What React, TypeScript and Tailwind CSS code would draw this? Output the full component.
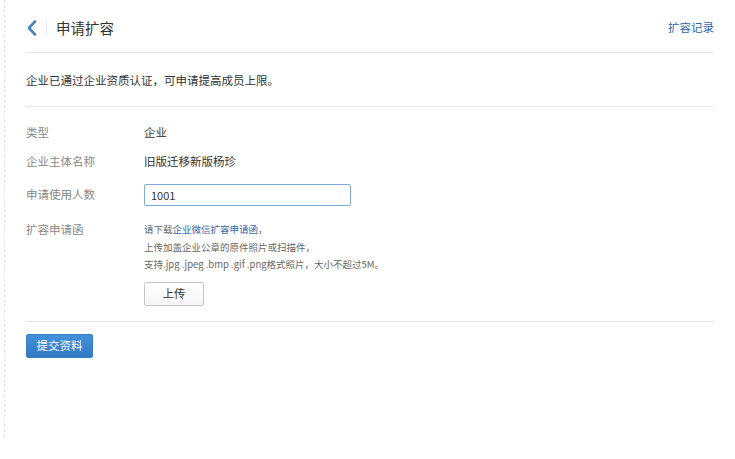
const font = { fontFamily: '"Noto Sans CJK SC", "Noto Sans", sans-serif' }

export default function App() {
  return (
    <div className="w-[735px] h-[459px] bg-white text-[11.5px] text-[#333]" style={font}>
      <div className="ml-[4px] h-[437px] border-l border-dashed border-[#e3e3e3] pl-[21px] w-[710px]">
        {/* Header */}
        <div className="h-[53px] border-b border-[#e4e4e4] flex items-center justify-between pt-[3px]">
          <div className="flex items-center">
            <svg width="10" height="16" viewBox="0 0 10 16" className="ml-[1px]">
              <polyline points="8,1.5 2,8 8,14.5" fill="none" stroke="#4a84c0" strokeWidth="2.6" strokeLinecap="round" strokeLinejoin="round" />
            </svg>
            <div className="w-px h-[15px] bg-[#ebebeb] ml-[9px]" />
            <span className="ml-[9px] text-[14.5px] text-[#333]">申请扩容</span>
          </div>
          <a className="text-[11.5px] text-[#2f6aa8] cursor-pointer">扩容记录</a>
        </div>

        {/* Notice */}
        <div className="h-[54px] border-b border-[#e4e4e4] flex items-center">
          <p className="leading-[16px]">企业已通过企业资质认证，可申请提高成员上限。</p>
        </div>

        {/* Form */}
        <div className="pt-[18px] pb-[15px] border-b border-[#e4e4e4]">
          <div className="flex h-[16px] items-center">
            <span className="w-[118px] text-[#888]">类型</span>
            <span>企业</span>
          </div>
          <div className="flex h-[16px] items-center mt-[13px]">
            <span className="w-[118px] text-[#888]">企业主体名称</span>
            <span>旧版迁移新版杨珍</span>
          </div>
          <div className="flex h-[22px] items-center mt-[14px]">
            <span className="w-[118px] text-[#888]">申请使用人数</span>
            <input
              defaultValue="1001"
              className="w-[207px] h-[22px] border border-[#7fa9d8] rounded-[2px] px-[6px] text-[11px] text-[#333] outline-none"
            />
          </div>
          <div className="flex mt-[14px]">
            <span className="w-[118px] text-[#888] leading-[18px]">扩容申请函</span>
            <div className="text-[9.5px] text-[#666] leading-[17.5px] pt-[1px]">
              <p>
                请下载<a className="text-[#2f6aa8] cursor-pointer">企业微信扩容申请函</a>，
              </p>
              <p>上传加盖企业公章的原件照片或扫描件，</p>
              <p>支持.jpg .jpeg .bmp .gif .png格式照片，大小不超过5M。</p>
              <button className="mt-[8px] w-[60px] h-[24px] border border-[#c6c6c6] rounded-[2px] bg-gradient-to-b from-white to-[#f4f4f4] text-[11.5px] text-[#333]">
                上传
              </button>
            </div>
          </div>
        </div>

        {/* Submit */}
        <button className="mt-[12px] w-[67px] h-[24px] rounded-[2px] bg-gradient-to-b from-[#4491da] to-[#3379c4] border border-[#3a80c8] text-white text-[11.5px]">
          提交资料
        </button>
      </div>
    </div>
  )
}
